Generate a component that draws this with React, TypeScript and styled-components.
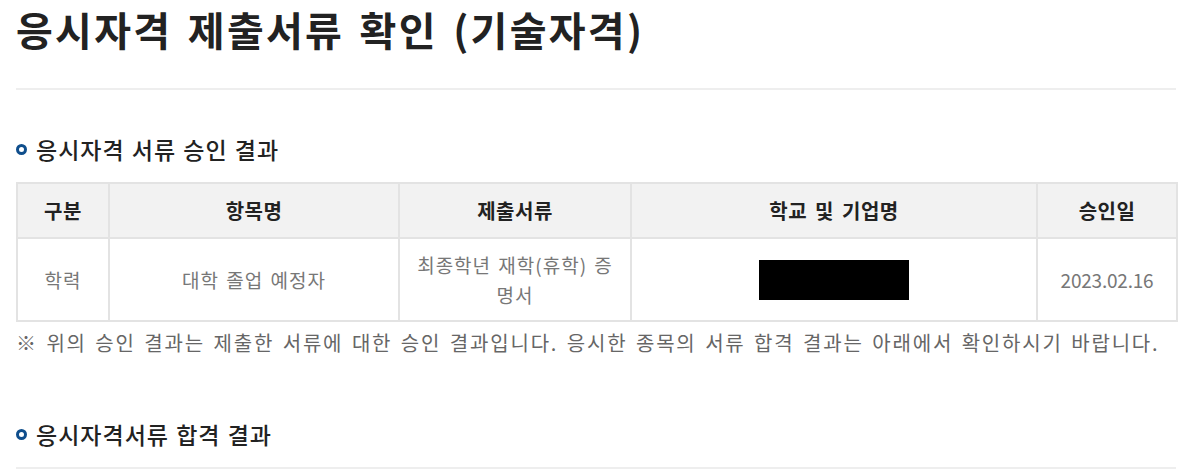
import styled, { createGlobalStyle } from 'styled-components';

const FONT = `'Noto Sans CJK KR', 'Noto Sans', sans-serif`;

const GlobalStyle = createGlobalStyle`
  html, body {
    margin: 0;
    padding: 0;
    background: #fff;
    font-family: ${FONT};
  }
`;

const Page = styled.div`
  width: 1160px;
  padding: 4px 0 0 16px;
  color: #222;
`;

const Title = styled.h1`
  margin: 0;
  font-size: 40px;
  line-height: 50px;
  font-weight: 700;
  letter-spacing: 2.3px;
  word-spacing: 4px;
  color: #222;
`;

const Divider = styled.hr`
  margin: 34px 0 0;
  border: none;
  height: 2px;
  background: #eee;
`;

interface HeadingProps {
  top: number;
}

const SectionHeading = styled.h2<HeadingProps>`
  display: flex;
  align-items: center;
  gap: 9px;
  margin: ${(props) => props.top}px 0 0;
  font-size: 23px;
  line-height: 30px;
  font-weight: 500;
  letter-spacing: 1px;
  word-spacing: 1px;
  color: #222;
`;

const Bullet = styled.span`
  flex: none;
  width: 11px;
  height: 11px;
  box-sizing: border-box;
  border: 3px solid #0f4e8c;
  border-radius: 50%;
`;

const Table = styled.table`
  width: 1160px;
  margin-top: 18px;
  border-collapse: collapse;
  table-layout: fixed;
  border: 2px solid #e3e3e3;
`;

const HeadCell = styled.th`
  height: 53px;
  padding: 0 10px;
  background: #f2f2f2;
  border: 2px solid #e3e3e3;
  font-size: 20px;
  font-weight: 700;
  letter-spacing: 0.5px;
  word-spacing: 3px;
  color: #222;
  text-align: center;
`;

interface CellProps {
  numeric?: boolean;
}

const Cell = styled.td<CellProps>`
  height: 81px;
  padding: 0 14px;
  border: 2px solid #e3e3e3;
  font-size: 19px;
  line-height: 30px;
  letter-spacing: ${(props) => (props.numeric ? '-0.2px' : '1px')};
  word-spacing: 2px;
  color: #777;
  text-align: center;
`;

const Redacted = styled.div`
  width: 150px;
  height: 40px;
  margin: 0 auto;
  background: #000;
`;

const Note = styled.p`
  margin: 8px 0 0;
  font-size: 20px;
  line-height: 26px;
  letter-spacing: 1.8px;
  word-spacing: 2.3px;
  color: #666;
  white-space: nowrap;
`;

const BottomLine = styled.div`
  margin-top: 18px;
  height: 2px;
  background: #eee;
`;

const columns = [92, 290, 232, 406, 140];

const App = () => (
  <>
    <GlobalStyle />
    <Page>
      <Title>응시자격 제출서류 확인 (기술자격)</Title>
      <Divider />
      <SectionHeading top={44}>
        <Bullet />
        응시자격 서류 승인 결과
      </SectionHeading>
      <Table>
        <colgroup>
          {columns.map((w) => (
            <col key={w} style={{ width: w }} />
          ))}
        </colgroup>
        <thead>
          <tr>
            <HeadCell>구분</HeadCell>
            <HeadCell>항목명</HeadCell>
            <HeadCell>제출서류</HeadCell>
            <HeadCell>학교 및 기업명</HeadCell>
            <HeadCell>승인일</HeadCell>
          </tr>
        </thead>
        <tbody>
          <tr>
            <Cell>학력</Cell>
            <Cell>대학 졸업 예정자</Cell>
            <Cell>최종학년 재학(휴학) 증명서</Cell>
            <Cell>
              <Redacted />
            </Cell>
            <Cell numeric>2023.02.16</Cell>
          </tr>
        </tbody>
      </Table>
      <Note>
        ※ 위의 승인 결과는 제출한 서류에 대한 승인 결과입니다. 응시한 종목의 서류 합격 결과는 아래에서 확인하시기 바랍니다.
      </Note>
      <SectionHeading top={63}>
        <Bullet />
        응시자격서류 합격 결과
      </SectionHeading>
      <BottomLine />
    </Page>
  </>
);

export default App;
